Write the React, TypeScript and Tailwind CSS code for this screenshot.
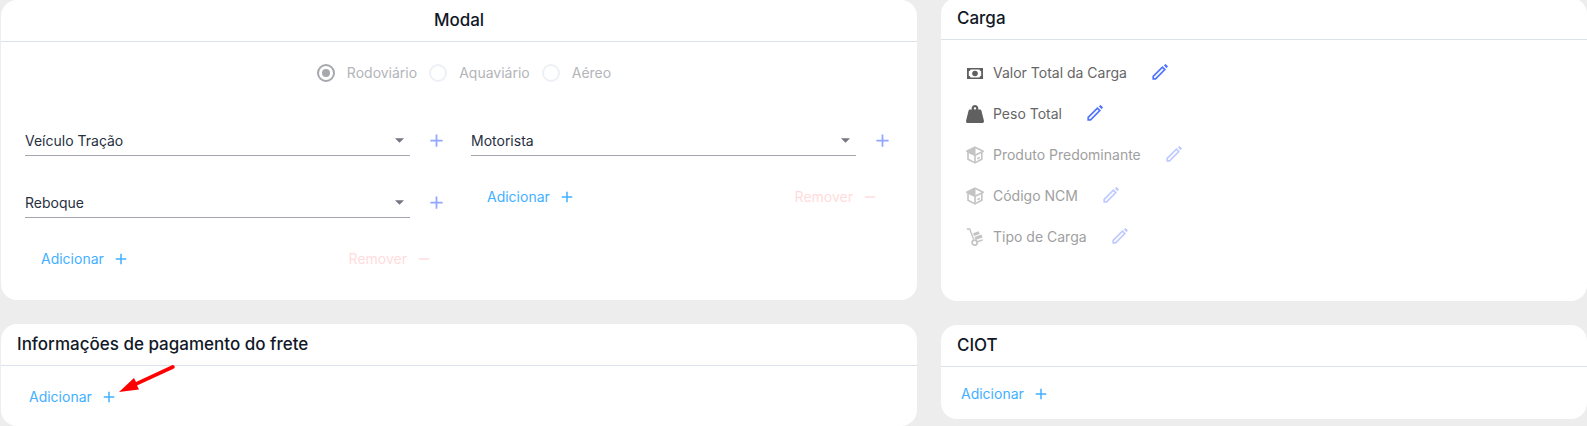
import type { ReactNode } from "react";
import { FaWeightHanging } from "react-icons/fa";
import { MdAdd, MdRemove } from "react-icons/md";

const modais = ["Rodoviário", "Aquaviário", "Aéreo"];

const itensCarga = [
  { label: "Valor Total da Carga", icon: <IconeDinheiro />, disabled: false },
  { label: "Peso Total", icon: <FaWeightHanging className="size-[18px]" />, disabled: false },
  { label: "Produto Predominante", icon: <IconeCaixa />, disabled: true },
  { label: "Código NCM", icon: <IconeCaixa />, disabled: true },
  { label: "Tipo de Carga", icon: <IconeCarrinho />, disabled: true },
];

function IconeDinheiro() {
  return (
    <svg viewBox="0 0 18 18" className="size-[18px]" fill="currentColor" aria-hidden="true">
      <path fillRule="evenodd" d="M1 4h16v11H1zM4.500 5.600A2 2 0 0 1 2.800 7.300v4.400a2 2 0 0 1 1.700 1.700h9a2 2 0 0 1 1.700-1.700V7.300a2 2 0 0 1-1.700-1.700z" />
      <circle cx="9" cy="9.500" r="2.800" />
    </svg>
  );
}

function IconeCaixa() {
  return (
    <svg viewBox="0 0 18 18" className="size-[18px]" fill="none" stroke="currentColor" strokeWidth="1.600" strokeLinejoin="round" aria-hidden="true">
      <path d="M9 1.200 17.200 5.200 15.800 6v7.300L9 16.900 2 13.300V6L.8 5.200z" />
      <path d="M2 6l7 3.200L15.800 6M9 9.200v7.600M11.300 12.700l2.600-1.300" />
      <path d="M.8 5.200 9 1.200v7.600z" fill="currentColor" strokeWidth="1" />
    </svg>
  );
}

function IconeCarrinho() {
  return (
    <svg viewBox="0 0 18 18" className="size-[18px]" fill="none" stroke="currentColor" strokeWidth="1.400" aria-hidden="true">
      <path d="M.8 1h2.900l4 10.600M10.800 14l6-2.200" />
      <circle cx="8.600" cy="14.700" r="2.500" strokeWidth="1.700" />
      <path d="m7 5.200 5.600-2 1.200 2.800-5.700 2zM8.500 8.900l7-2.500 1.100 3-7 2.500z" fill="currentColor" stroke="none" />
    </svg>
  );
}

function IconeLapis() {
  return (
    <svg viewBox="0 0 16 16" className="size-4" fill="none" stroke="currentColor" strokeWidth="1.700" aria-hidden="true">
      <path d="M1.200 14.800v-2.400l9.200-9.200 2.400 2.400-9.200 9.200z" />
      <path d="m12.300 1.500 1.200-1.200 2.200 2.200-1.200 1.200z" fill="currentColor" strokeWidth="1" />
    </svg>
  );
}

function Cartao({ titulo, centro, children }: { titulo: string; centro?: boolean; children: ReactNode }) {
  return (
    <section className="rounded-2xl bg-white">
      <header className={`border-b border-[#dbe2ec] px-4 py-2 ${centro ? "text-center" : ""}`}>
        <h2 className="text-[17px] leading-[25px] font-medium text-[#111827]">{titulo}</h2>
      </header>
      {children}
    </section>
  );
}

function Adicionar() {
  return (
    <button type="button" className="flex items-center gap-2 text-[#42b0ff]">
      Adicionar
      <MdAdd className="size-[18px]" />
    </button>
  );
}

function Remover() {
  return (
    <button type="button" disabled className="flex items-center gap-2 text-[#ffdcdc]">
      Remover
      <MdRemove className="size-[18px]" />
    </button>
  );
}

function Selecao({ label }: { label: string }) {
  return (
    <div className="flex items-center pr-6">
      <div className="relative flex-1">
        <select aria-label={label} className="block h-[30px] w-full appearance-none border-b border-[#a3a6ad] pr-6 text-[#27303f]">
          <option>{label}</option>
        </select>
        <svg viewBox="0 0 10 5" className="pointer-events-none absolute top-3 right-1.5 h-[5px] w-[9px] text-[#757780]" fill="currentColor" aria-hidden="true">
          <path d="M0 0h10L5 5z" />
        </svg>
      </div>
      <button type="button" aria-label={`Novo ${label}`} className="mb-0.5 ml-4 text-[#91a7ff]">
        <MdAdd className="size-[21px]" />
      </button>
    </div>
  );
}

function Acoes() {
  return (
    <div className="flex justify-between pr-[38px] pl-4">
      <Adicionar />
      <Remover />
    </div>
  );
}

export default function App() {
  return (
    <main className="grid min-h-screen grid-cols-[916fr_646fr] items-start gap-6 bg-[#ededed] pl-px font-[Inter,sans-serif] text-sm leading-[22px]">
      <div className="flex flex-col gap-6">
        <Cartao titulo="Modal" centro>
          <fieldset disabled className="flex justify-center gap-3 pt-5 pl-2.5 text-[#b3b5b9]">
            {modais.map((modal, i) => (
              <label key={modal} className="flex items-center gap-3">
                <input
                  type="radio"
                  name="modal"
                  defaultChecked={i === 0}
                  className="size-[18px] appearance-none rounded-full border-2 border-[#edf0f5] bg-white checked:border-[#a5a8ad] checked:bg-[#a5a8ad] checked:bg-clip-content checked:p-[3px]"
                />
                {modal}
              </label>
            ))}
          </fieldset>
          <div className="grid grid-cols-2 pt-[42px] pb-[30px] pl-6">
            <div className="flex flex-col">
              <Selecao label="Veículo Tração" />
              <div className="mt-8 mb-[30px]">
                <Selecao label="Reboque" />
              </div>
              <Acoes />
            </div>
            <div className="flex flex-col gap-[30px]">
              <Selecao label="Motorista" />
              <Acoes />
            </div>
          </div>
        </Cartao>

        <Cartao titulo="Informações de pagamento do frete">
          <div className="relative px-7 pt-5 pb-[18px]">
            <Adicionar />
            <svg viewBox="0 0 58 30" className="pointer-events-none absolute -top-1 left-[117px] h-[30px] w-[58px]" fill="#ff0000" aria-hidden="true">
              <path d="M1 30 16 16l2 4L54 3.200a2 2 0 0 1 2 3.400L19 23.500l2 4z" />
            </svg>
          </div>
        </Cartao>
      </div>

      <div className="-mt-0.5 flex flex-col gap-6">
        <Cartao titulo="Carga">
          <ul className="px-[25px] pt-3 pb-11">
            {itensCarga.map((item) => (
              <li key={item.label} className={`flex h-[41px] items-center ${item.disabled ? "text-[#a0a0a0]" : "text-[#666666]"}`}>
                <span className={item.disabled ? "text-[#c4c4c4]" : "text-[#606060]"}>{item.icon}</span>
                <span className="ml-[9px]">{item.label}</span>
                <button
                  type="button"
                  disabled={item.disabled}
                  aria-label={`Editar ${item.label}`}
                  className={`mb-0.5 ml-[25px] ${item.disabled ? "text-[#bfcbff]" : "text-[#4f74ff]"}`}
                >
                  <IconeLapis />
                </button>
              </li>
            ))}
          </ul>
        </Cartao>

        <Cartao titulo="CIOT">
          <div className="px-5 pt-4 pb-[14px]">
            <Adicionar />
          </div>
        </Cartao>
      </div>
    </main>
  );
}
